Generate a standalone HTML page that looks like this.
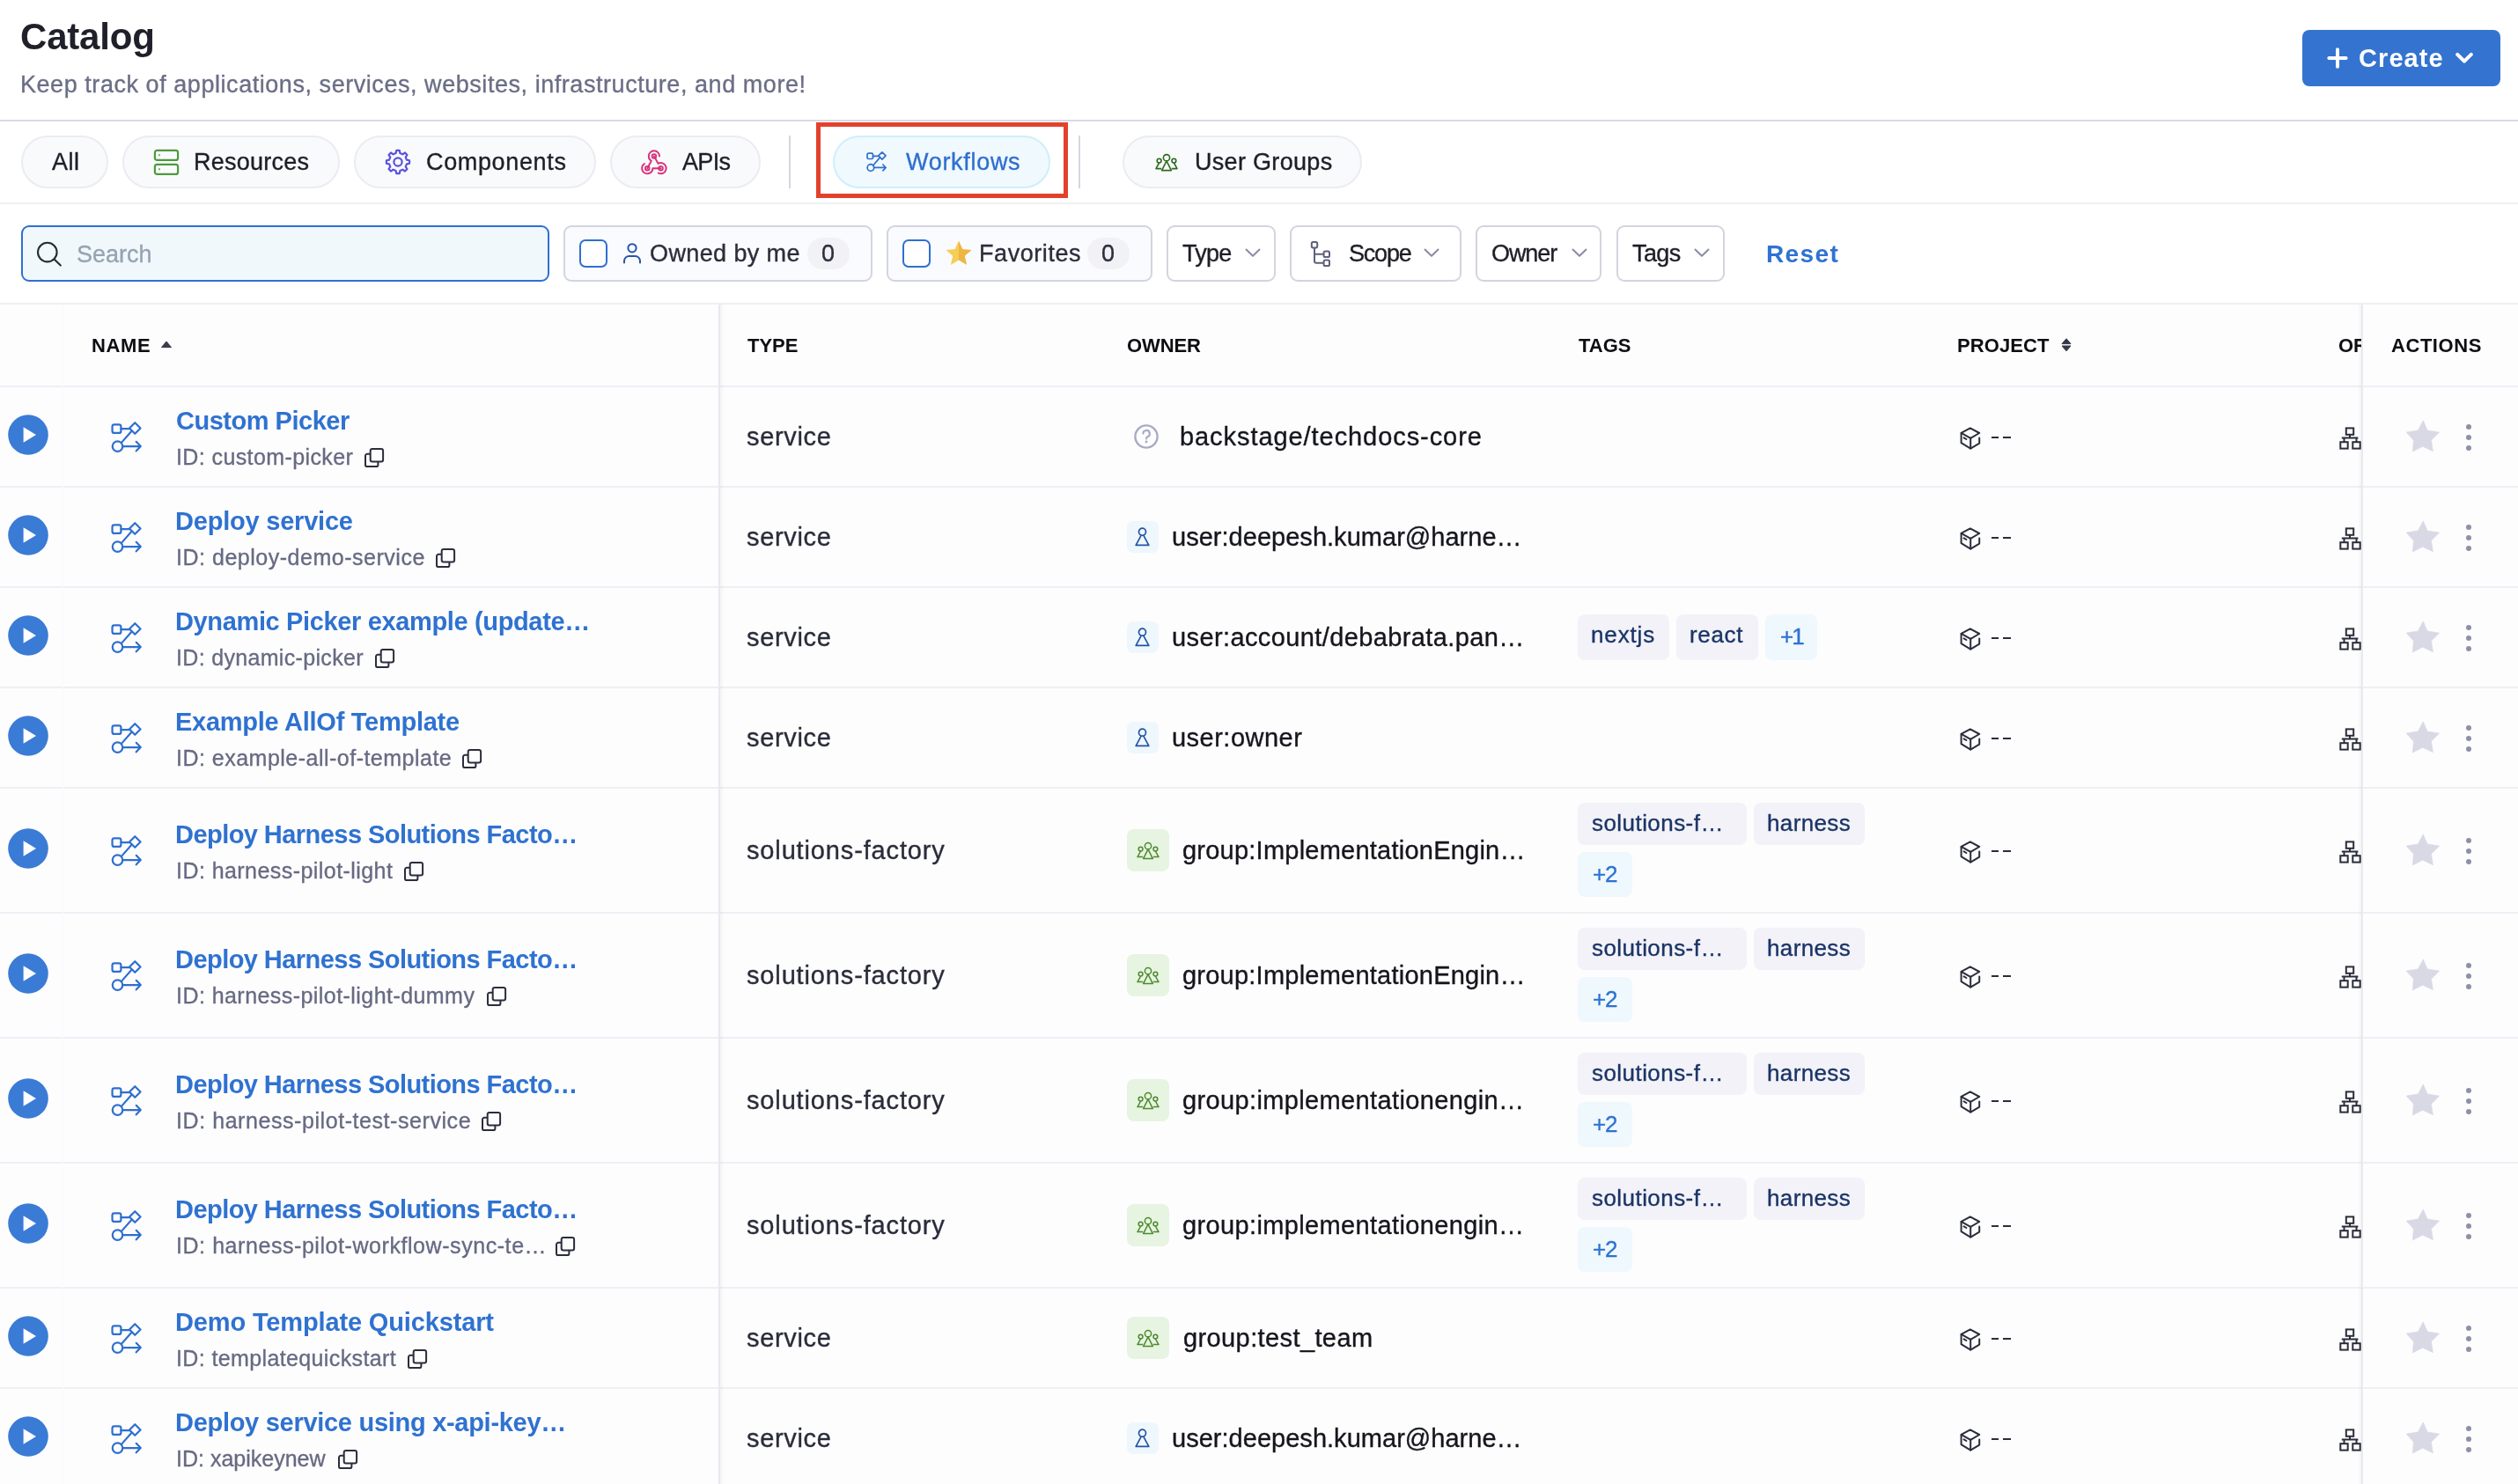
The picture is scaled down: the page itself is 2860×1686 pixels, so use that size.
<!DOCTYPE html>
<html><head><meta charset="utf-8"><title>Catalog</title>
<style>
html,body{margin:0;padding:0}
body{width:2860px;height:1686px;overflow:hidden;position:relative;background:#ffffff;font-family:'Liberation Sans', sans-serif}
.t{position:absolute;white-space:pre;line-height:1;-webkit-font-smoothing:antialiased;will-change:transform}
svg{overflow:visible}
</style></head><body>
<div style="position:absolute;left:0px;top:346px;width:2860px;height:1340px;background:#fdfdfe"></div>
<div style="position:absolute;left:2615px;top:34px;width:225px;height:64px;background:#3474d0;border-radius:8px"></div>
<svg style="position:absolute;left:2641px;top:52px;" width="28" height="28" viewBox="0 0 28 28"><path d="M14 4.35v19.3M4.35 14h19.3" stroke="#fff" stroke-width="4" stroke-linecap="round"/></svg>
<svg style="position:absolute;left:2787px;top:57px;" width="26" height="18" viewBox="0 0 26 18"><path d="M4.2 4.9L12 12.7L19.8 4.9" stroke="#fff" stroke-width="4" fill="none" stroke-linecap="round" stroke-linejoin="round"/></svg>
<div style="position:absolute;left:0px;top:136px;width:2860px;height:2px;background:#d9dae5"></div>
<div style="position:absolute;left:24px;top:154px;width:99px;height:60px;box-sizing:border-box;border:2px solid #ecebf3;background:#f9fafc;border-radius:30px"></div>
<div style="position:absolute;left:139px;top:154px;width:247px;height:60px;box-sizing:border-box;border:2px solid #ecebf3;background:#f9fafc;border-radius:30px"></div>
<svg style="position:absolute;left:172px;top:167px;" width="34" height="34" viewBox="0 0 34 34"><rect x="3.9" y="3.9" width="26.2" height="11" rx="2.5" stroke="#4e9a3c" stroke-width="2.2" fill="none"/><rect x="3.9" y="19.9" width="26.2" height="11" rx="2.5" stroke="#4e9a3c" stroke-width="2.2" fill="none"/><rect x="8" y="8.2" width="2" height="2" fill="#7ab56a"/><rect x="8" y="24.2" width="2" height="2" fill="#7ab56a"/></svg>
<div style="position:absolute;left:402px;top:154px;width:275px;height:60px;box-sizing:border-box;border:2px solid #ecebf3;background:#f9fafc;border-radius:30px"></div>
<svg style="position:absolute;left:434px;top:166px;" width="36" height="36" viewBox="0 0 36 36"><path d="M15.62 8.08 L16.24 4.92 L19.76 4.92 L20.38 8.08 L23.33 9.30 L26.01 7.51 L28.49 9.99 L26.70 12.67 L27.92 15.62 L31.08 16.24 L31.08 19.76 L27.92 20.38 L26.70 23.33 L28.49 26.01 L26.01 28.49 L23.33 26.70 L20.38 27.92 L19.76 31.08 L16.24 31.08 L15.62 27.92 L12.67 26.70 L9.99 28.49 L7.51 26.01 L9.30 23.33 L8.08 20.38 L4.92 19.76 L4.92 16.24 L8.08 15.62 L9.30 12.67 L7.51 9.99 L9.99 7.51 L12.67 9.30Z" stroke="#5a52e0" stroke-width="2.2" fill="none" stroke-linejoin="round"/><circle cx="18" cy="18" r="4.6" stroke="#5a52e0" stroke-width="2.2" fill="none"/></svg>
<div style="position:absolute;left:693px;top:154px;width:171px;height:60px;box-sizing:border-box;border:2px solid #ecebf3;background:#f9fafc;border-radius:30px"></div>
<svg style="position:absolute;left:720px;top:162px;" width="44" height="44" viewBox="0 0 44 44"><g transform="translate(4.54 3.16) scale(1.53)" stroke="#d8317a" stroke-width="1.25" fill="none" stroke-linecap="round" stroke-linejoin="round">
<path d="M4.876 13.61a4 4 0 1 0 6.124 3.39h6"/>
<path d="M15.066 20.502a4 4 0 1 0 1.934 -7.502c-.706 0 -1.424 .179 -2 .5l-3 -5.5"/>
<path d="M16 8a4 4 0 1 0 -8 0c0 1.506 .77 2.818 2 3.5l-3 5.5"/>
<circle cx="12" cy="8" r="1.5"/><circle cx="7" cy="17" r="1.5"/><circle cx="17" cy="17" r="1.5"/>
</g></svg>
<div style="position:absolute;left:896px;top:154px;width:2px;height:60px;background:#d5d6e1"></div>
<div style="position:absolute;left:1225px;top:154px;width:2px;height:60px;background:#d5d6e1"></div>
<div style="position:absolute;left:927px;top:139px;width:286px;height:86px;box-sizing:border-box;border:5px solid #e2412b"></div>
<div style="position:absolute;left:946px;top:154px;width:247px;height:60px;box-sizing:border-box;border:2px solid #cfeefb;background:#f0f9fd;border-radius:30px"></div>
<svg style="position:absolute;left:984px;top:172px;" width="23" height="23" viewBox="0 0 23 23"><g transform="scale(0.6764705882352942)" stroke="#2e6fcf" stroke-width="2.51" fill="none" stroke-linecap="round" stroke-linejoin="round">
<rect x="1.5" y="3.2" width="9.6" height="9.4" rx="2.2"/>
<path d="M11.1 7.9 H20.3"/>
<path d="M26.5 1.2 L32.6 7.3 L26.5 13.4 L20.4 7.3 Z"/>
<path d="M22.6 10.6 L11.6 23.2"/>
<circle cx="7.3" cy="27.3" r="5.6"/>
<path d="M12.9 27.3 H32.6 M27.9 22.2 L32.8 27.3 L27.9 32.4"/>
</g></svg>
<div style="position:absolute;left:1275px;top:154px;width:272px;height:60px;box-sizing:border-box;border:2px solid #ecebf3;background:#f9fafc;border-radius:30px"></div>
<svg style="position:absolute;left:1312px;top:174px;" width="26" height="21" viewBox="0 0 26 21"><g stroke="#2d6a1f" stroke-width="1.6" fill="none" stroke-linejoin="round">
<circle cx="13" cy="5.2" r="3.6"/><path d="M13 8.8 L7.6 19.6 H18.4 Z"/>
<circle cx="4.6" cy="8.6" r="2.4"/><path d="M4.6 11 L1 17.6 H7.2"/>
<circle cx="21.4" cy="8.6" r="2.4"/><path d="M21.4 11 L25 17.6 H18.8"/>
</g></svg>
<div style="position:absolute;left:0px;top:230px;width:2860px;height:2px;background:#efeff5"></div>
<div style="position:absolute;left:24px;top:256px;width:600px;height:64px;box-sizing:border-box;border:2.5px solid #2f6fd0;background:#f0f8fc;border-radius:9px"></div>
<svg style="position:absolute;left:40px;top:273px;" width="32" height="32" viewBox="0 0 32 32"><circle cx="13.8" cy="13.6" r="10.8" stroke="#2b2b36" stroke-width="2.1" fill="none"/><path d="M21.6 21.4 L28.8 28.6" stroke="#2b2b36" stroke-width="2.1" stroke-linecap="round"/></svg>
<div style="position:absolute;left:640px;top:256px;width:351px;height:64px;box-sizing:border-box;border:2px solid #d3d4df;background:#fafbfe;border-radius:9px"></div>
<div style="position:absolute;left:658px;top:272px;width:32px;height:32px;box-sizing:border-box;border:2.5px solid #2f6fd0;background:#fff;border-radius:7px"></div>
<svg style="position:absolute;left:706px;top:275px;" width="24" height="26" viewBox="0 0 24 26"><circle cx="12" cy="6.8" r="4.6" stroke="#2553a8" stroke-width="2" fill="none"/><path d="M3 23.5 V21.5 A5.5 5.5 0 0 1 8.5 16 H15.5 A5.5 5.5 0 0 1 21 21.5 V23.5" stroke="#2553a8" stroke-width="2" fill="none" stroke-linecap="round"/></svg>
<div style="position:absolute;left:917px;top:270px;width:48px;height:36px;background:#f2f1f6;border-radius:18px"></div>
<div style="position:absolute;left:1007px;top:256px;width:302px;height:64px;box-sizing:border-box;border:2px solid #d3d4df;background:#fafbfe;border-radius:9px"></div>
<div style="position:absolute;left:1025px;top:272px;width:32px;height:32px;box-sizing:border-box;border:2.5px solid #2f6fd0;background:#fff;border-radius:7px"></div>
<svg style="position:absolute;left:1072px;top:272px;" width="34" height="32" viewBox="0 0 34 32"><path d="M17 1.5 L21.3 11 L31.6 11.9 L23.8 18.8 L26.2 29 L17 23.6 Z" fill="#efb642"/><path d="M17 1.5 L12.7 11 L2.4 11.9 L10.2 18.8 L7.8 29 L17 23.6 Z" fill="#f5cd57"/></svg>
<div style="position:absolute;left:1235px;top:270px;width:48px;height:36px;background:#f2f1f6;border-radius:18px"></div>
<div style="position:absolute;left:1325px;top:256px;width:124px;height:64px;box-sizing:border-box;border:2px solid #d3d4df;background:#ffffff;border-radius:9px"></div>
<svg style="position:absolute;left:1413px;top:281px;" width="20" height="13" viewBox="0 0 20 13"><path d="M2.5 2.5 L10 9.8 L17.5 2.5" stroke="#8a8ca4" stroke-width="2" fill="none" stroke-linecap="round" stroke-linejoin="round"/></svg>
<div style="position:absolute;left:1465px;top:256px;width:195px;height:64px;box-sizing:border-box;border:2px solid #d3d4df;background:#ffffff;border-radius:9px"></div>
<svg style="position:absolute;left:1486px;top:271px;" width="28" height="34" viewBox="0 0 28 34"><g stroke="#5d607b" stroke-width="2" fill="none"><rect x="3.8" y="4" width="6.4" height="6.4" rx="1.6"/><rect x="17.6" y="14.6" width="6.4" height="6.4" rx="1.6"/><rect x="17.6" y="24.6" width="6.4" height="6.4" rx="1.6"/><path d="M7 10.4 V25.6 A2.2 2.2 0 0 0 9.2 27.8 H17.6 M7 17.8 H17.6"/></g></svg>
<svg style="position:absolute;left:1616px;top:281px;" width="20" height="13" viewBox="0 0 20 13"><path d="M2.5 2.5 L10 9.8 L17.5 2.5" stroke="#8a8ca4" stroke-width="2" fill="none" stroke-linecap="round" stroke-linejoin="round"/></svg>
<div style="position:absolute;left:1676px;top:256px;width:143px;height:64px;box-sizing:border-box;border:2px solid #d3d4df;background:#ffffff;border-radius:9px"></div>
<svg style="position:absolute;left:1784px;top:281px;" width="20" height="13" viewBox="0 0 20 13"><path d="M2.5 2.5 L10 9.8 L17.5 2.5" stroke="#8a8ca4" stroke-width="2" fill="none" stroke-linecap="round" stroke-linejoin="round"/></svg>
<div style="position:absolute;left:1836px;top:256px;width:123px;height:64px;box-sizing:border-box;border:2px solid #d3d4df;background:#ffffff;border-radius:9px"></div>
<svg style="position:absolute;left:1923px;top:281px;" width="20" height="13" viewBox="0 0 20 13"><path d="M2.5 2.5 L10 9.8 L17.5 2.5" stroke="#8a8ca4" stroke-width="2" fill="none" stroke-linecap="round" stroke-linejoin="round"/></svg>
<div style="position:absolute;left:0px;top:344px;width:2860px;height:2px;background:#efeff5"></div>
<svg style="position:absolute;left:182px;top:386px;" width="14" height="10" viewBox="0 0 14 10"><path d="M1.5 8.6 L7 2 L12.5 8.6 Z" fill="#3a3b4a" stroke="#3a3b4a" stroke-width="1" stroke-linejoin="round"/></svg>
<svg style="position:absolute;left:2340px;top:383px;" width="14" height="18" viewBox="0 0 14 18"><path d="M2 7.6 L7 1.8 L12 7.6 Z M2 10 L7 15.8 L12 10 Z" fill="#363746" stroke="#363746" stroke-width="1" stroke-linejoin="round"/></svg>
<div style="position:absolute;left:0px;top:438px;width:2860px;height:2px;background:#efeff5"></div>
<div style="position:absolute;left:0px;top:552px;width:2860px;height:2px;background:#efeff5"></div>
<svg style="position:absolute;left:9px;top:471px;" width="46" height="46" viewBox="0 0 46 46"><circle cx="23" cy="23" r="22.8" fill="#3a7bd5"/><path d="M17.6 14.2 L32 23 L17.6 31.8 Z" fill="#fff"/></svg>
<svg style="position:absolute;left:126px;top:479px;" width="35" height="35" viewBox="0 0 35 35"><g transform="scale(1.0294117647058822)" stroke="#2e6fcf" stroke-width="2.14" fill="none" stroke-linecap="round" stroke-linejoin="round">
<rect x="1.5" y="3.2" width="9.6" height="9.4" rx="2.2"/>
<path d="M11.1 7.9 H20.3"/>
<path d="M26.5 1.2 L32.6 7.3 L26.5 13.4 L20.4 7.3 Z"/>
<path d="M22.6 10.6 L11.6 23.2"/>
<circle cx="7.3" cy="27.3" r="5.6"/>
<path d="M12.9 27.3 H32.6 M27.9 22.2 L32.8 27.3 L27.9 32.4"/>
</g></svg>
<svg style="position:absolute;left:414px;top:509px;" width="24" height="24" viewBox="0 0 24 24"><g stroke="#2b2d3b" stroke-width="2" fill="none" stroke-linejoin="round"><rect x="6.7" y="1" width="14.4" height="14.4" rx="2.2"/><path d="M6.7 6.7 H3.2 A2.2 2.2 0 0 0 1 8.9 V18.9 A2.2 2.2 0 0 0 3.2 21.1 H13.2 A2.2 2.2 0 0 0 15.4 18.9 V15.4"/></g></svg>
<svg style="position:absolute;left:1287px;top:481px;" width="30" height="30" viewBox="0 0 30 30"><circle cx="15" cy="15" r="12.6" stroke="#a9abc4" stroke-width="2.4" fill="none"/><path d="M11.4 11.6 A3.7 3.7 0 1 1 16.2 15.2 C15.2 15.7 15 16.3 15 17.4" stroke="#a9abc4" stroke-width="2.2" fill="none" stroke-linecap="round"/><circle cx="15" cy="21" r="1.4" fill="#a9abc4"/></svg>
<svg style="position:absolute;left:2225px;top:485px;" width="26" height="26" viewBox="0 0 26 26"><g stroke="#2b2d3b" stroke-width="2" fill="none" stroke-linejoin="round" stroke-linecap="round"><path d="M2.6 6.9 L12.8 1.4 L23.2 7 L13.2 12.8 Z"/><path d="M2.6 6.9 V18.2 L13.2 24.6 L23.2 18.6 V12.4"/><path d="M13.2 12.8 V24.6"/><path d="M5.6 12.4 L8.4 14"/></g></svg>
<div style="position:absolute;left:2262px;top:496px;width:8px;height:2px;background:#2b2d3b"></div>
<div style="position:absolute;left:2275px;top:496px;width:9px;height:2px;background:#2b2d3b"></div>
<svg style="position:absolute;left:2656px;top:485px;" width="26" height="26" viewBox="0 0 26 26"><g stroke="#2b2d3b" stroke-width="2" fill="none"><rect x="8.8" y="1.4" width="8.4" height="7.4"/><rect x="2.3" y="17.2" width="8.4" height="7.4"/><rect x="16.3" y="17.2" width="8.4" height="7.4"/><path d="M13 8.8 V12.4 M3.8 12.4 H22.4 M6.5 12.4 V17.2 M20.5 12.4 V17.2"/></g></svg>
<svg style="position:absolute;left:2730px;top:475px;" width="44" height="42" viewBox="0 0 44 42"><path d="M22.3 2.8 L27.1 13.9 L40.6 16.1 L31.5 25.2 L33.4 37.7 L21.7 32.2 L10.3 38.1 L11.4 25.2 L3.1 16.1 L16.4 13.9 Z" fill="#d9d9e6" stroke="#d9d9e6" stroke-width="0.6" stroke-linejoin="round"/></svg>
<div style="position:absolute;left:2801px;top:482px;width:6px;height:6px;background:#8e90a6;border-radius:3px"></div>
<div style="position:absolute;left:2801px;top:494px;width:6px;height:6px;background:#8e90a6;border-radius:3px"></div>
<div style="position:absolute;left:2801px;top:506px;width:6px;height:6px;background:#8e90a6;border-radius:3px"></div>
<div style="position:absolute;left:0px;top:666px;width:2860px;height:2px;background:#efeff5"></div>
<svg style="position:absolute;left:9px;top:585px;" width="46" height="46" viewBox="0 0 46 46"><circle cx="23" cy="23" r="22.8" fill="#3a7bd5"/><path d="M17.6 14.2 L32 23 L17.6 31.8 Z" fill="#fff"/></svg>
<svg style="position:absolute;left:126px;top:593px;" width="35" height="35" viewBox="0 0 35 35"><g transform="scale(1.0294117647058822)" stroke="#2e6fcf" stroke-width="2.14" fill="none" stroke-linecap="round" stroke-linejoin="round">
<rect x="1.5" y="3.2" width="9.6" height="9.4" rx="2.2"/>
<path d="M11.1 7.9 H20.3"/>
<path d="M26.5 1.2 L32.6 7.3 L26.5 13.4 L20.4 7.3 Z"/>
<path d="M22.6 10.6 L11.6 23.2"/>
<circle cx="7.3" cy="27.3" r="5.6"/>
<path d="M12.9 27.3 H32.6 M27.9 22.2 L32.8 27.3 L27.9 32.4"/>
</g></svg>
<svg style="position:absolute;left:495px;top:623px;" width="24" height="24" viewBox="0 0 24 24"><g stroke="#2b2d3b" stroke-width="2" fill="none" stroke-linejoin="round"><rect x="6.7" y="1" width="14.4" height="14.4" rx="2.2"/><path d="M6.7 6.7 H3.2 A2.2 2.2 0 0 0 1 8.9 V18.9 A2.2 2.2 0 0 0 3.2 21.1 H13.2 A2.2 2.2 0 0 0 15.4 18.9 V15.4"/></g></svg>
<div style="position:absolute;left:1280px;top:592px;width:36px;height:36px;background:#eef7fc;border-radius:7px"></div>
<svg style="position:absolute;left:1289px;top:599px;" width="18" height="22" viewBox="0 0 18 22"><circle cx="8.5" cy="5.2" r="4" stroke="#2553a8" stroke-width="1.7" fill="none"/><path d="M7.2 9.2 L1.2 20.4 H15.8 L9.8 9.2" stroke="#2553a8" stroke-width="1.7" fill="none" stroke-linejoin="round"/></svg>
<svg style="position:absolute;left:2225px;top:599px;" width="26" height="26" viewBox="0 0 26 26"><g stroke="#2b2d3b" stroke-width="2" fill="none" stroke-linejoin="round" stroke-linecap="round"><path d="M2.6 6.9 L12.8 1.4 L23.2 7 L13.2 12.8 Z"/><path d="M2.6 6.9 V18.2 L13.2 24.6 L23.2 18.6 V12.4"/><path d="M13.2 12.8 V24.6"/><path d="M5.6 12.4 L8.4 14"/></g></svg>
<div style="position:absolute;left:2262px;top:610px;width:8px;height:2px;background:#2b2d3b"></div>
<div style="position:absolute;left:2275px;top:610px;width:9px;height:2px;background:#2b2d3b"></div>
<svg style="position:absolute;left:2656px;top:599px;" width="26" height="26" viewBox="0 0 26 26"><g stroke="#2b2d3b" stroke-width="2" fill="none"><rect x="8.8" y="1.4" width="8.4" height="7.4"/><rect x="2.3" y="17.2" width="8.4" height="7.4"/><rect x="16.3" y="17.2" width="8.4" height="7.4"/><path d="M13 8.8 V12.4 M3.8 12.4 H22.4 M6.5 12.4 V17.2 M20.5 12.4 V17.2"/></g></svg>
<svg style="position:absolute;left:2730px;top:589px;" width="44" height="42" viewBox="0 0 44 42"><path d="M22.3 2.8 L27.1 13.9 L40.6 16.1 L31.5 25.2 L33.4 37.7 L21.7 32.2 L10.3 38.1 L11.4 25.2 L3.1 16.1 L16.4 13.9 Z" fill="#d9d9e6" stroke="#d9d9e6" stroke-width="0.6" stroke-linejoin="round"/></svg>
<div style="position:absolute;left:2801px;top:596px;width:6px;height:6px;background:#8e90a6;border-radius:3px"></div>
<div style="position:absolute;left:2801px;top:608px;width:6px;height:6px;background:#8e90a6;border-radius:3px"></div>
<div style="position:absolute;left:2801px;top:620px;width:6px;height:6px;background:#8e90a6;border-radius:3px"></div>
<div style="position:absolute;left:0px;top:780px;width:2860px;height:2px;background:#efeff5"></div>
<svg style="position:absolute;left:9px;top:699px;" width="46" height="46" viewBox="0 0 46 46"><circle cx="23" cy="23" r="22.8" fill="#3a7bd5"/><path d="M17.6 14.2 L32 23 L17.6 31.8 Z" fill="#fff"/></svg>
<svg style="position:absolute;left:126px;top:707px;" width="35" height="35" viewBox="0 0 35 35"><g transform="scale(1.0294117647058822)" stroke="#2e6fcf" stroke-width="2.14" fill="none" stroke-linecap="round" stroke-linejoin="round">
<rect x="1.5" y="3.2" width="9.6" height="9.4" rx="2.2"/>
<path d="M11.1 7.9 H20.3"/>
<path d="M26.5 1.2 L32.6 7.3 L26.5 13.4 L20.4 7.3 Z"/>
<path d="M22.6 10.6 L11.6 23.2"/>
<circle cx="7.3" cy="27.3" r="5.6"/>
<path d="M12.9 27.3 H32.6 M27.9 22.2 L32.8 27.3 L27.9 32.4"/>
</g></svg>
<svg style="position:absolute;left:426px;top:737px;" width="24" height="24" viewBox="0 0 24 24"><g stroke="#2b2d3b" stroke-width="2" fill="none" stroke-linejoin="round"><rect x="6.7" y="1" width="14.4" height="14.4" rx="2.2"/><path d="M6.7 6.7 H3.2 A2.2 2.2 0 0 0 1 8.9 V18.9 A2.2 2.2 0 0 0 3.2 21.1 H13.2 A2.2 2.2 0 0 0 15.4 18.9 V15.4"/></g></svg>
<div style="position:absolute;left:1280px;top:706px;width:36px;height:36px;background:#eef7fc;border-radius:7px"></div>
<svg style="position:absolute;left:1289px;top:713px;" width="18" height="22" viewBox="0 0 18 22"><circle cx="8.5" cy="5.2" r="4" stroke="#2553a8" stroke-width="1.7" fill="none"/><path d="M7.2 9.2 L1.2 20.4 H15.8 L9.8 9.2" stroke="#2553a8" stroke-width="1.7" fill="none" stroke-linejoin="round"/></svg>
<div style="position:absolute;left:1792px;top:698px;width:104px;height:52px;background:#f2f2f8;border-radius:8px"></div>
<div style="position:absolute;left:1904px;top:698px;width:93px;height:52px;background:#f2f2f8;border-radius:8px"></div>
<div style="position:absolute;left:2005px;top:698px;width:59px;height:52px;background:#eff8fd;border-radius:8px"></div>
<svg style="position:absolute;left:2225px;top:713px;" width="26" height="26" viewBox="0 0 26 26"><g stroke="#2b2d3b" stroke-width="2" fill="none" stroke-linejoin="round" stroke-linecap="round"><path d="M2.6 6.9 L12.8 1.4 L23.2 7 L13.2 12.8 Z"/><path d="M2.6 6.9 V18.2 L13.2 24.6 L23.2 18.6 V12.4"/><path d="M13.2 12.8 V24.6"/><path d="M5.6 12.4 L8.4 14"/></g></svg>
<div style="position:absolute;left:2262px;top:724px;width:8px;height:2px;background:#2b2d3b"></div>
<div style="position:absolute;left:2275px;top:724px;width:9px;height:2px;background:#2b2d3b"></div>
<svg style="position:absolute;left:2656px;top:713px;" width="26" height="26" viewBox="0 0 26 26"><g stroke="#2b2d3b" stroke-width="2" fill="none"><rect x="8.8" y="1.4" width="8.4" height="7.4"/><rect x="2.3" y="17.2" width="8.4" height="7.4"/><rect x="16.3" y="17.2" width="8.4" height="7.4"/><path d="M13 8.8 V12.4 M3.8 12.4 H22.4 M6.5 12.4 V17.2 M20.5 12.4 V17.2"/></g></svg>
<svg style="position:absolute;left:2730px;top:703px;" width="44" height="42" viewBox="0 0 44 42"><path d="M22.3 2.8 L27.1 13.9 L40.6 16.1 L31.5 25.2 L33.4 37.7 L21.7 32.2 L10.3 38.1 L11.4 25.2 L3.1 16.1 L16.4 13.9 Z" fill="#d9d9e6" stroke="#d9d9e6" stroke-width="0.6" stroke-linejoin="round"/></svg>
<div style="position:absolute;left:2801px;top:710px;width:6px;height:6px;background:#8e90a6;border-radius:3px"></div>
<div style="position:absolute;left:2801px;top:722px;width:6px;height:6px;background:#8e90a6;border-radius:3px"></div>
<div style="position:absolute;left:2801px;top:734px;width:6px;height:6px;background:#8e90a6;border-radius:3px"></div>
<div style="position:absolute;left:0px;top:894px;width:2860px;height:2px;background:#efeff5"></div>
<svg style="position:absolute;left:9px;top:813px;" width="46" height="46" viewBox="0 0 46 46"><circle cx="23" cy="23" r="22.8" fill="#3a7bd5"/><path d="M17.6 14.2 L32 23 L17.6 31.8 Z" fill="#fff"/></svg>
<svg style="position:absolute;left:126px;top:821px;" width="35" height="35" viewBox="0 0 35 35"><g transform="scale(1.0294117647058822)" stroke="#2e6fcf" stroke-width="2.14" fill="none" stroke-linecap="round" stroke-linejoin="round">
<rect x="1.5" y="3.2" width="9.6" height="9.4" rx="2.2"/>
<path d="M11.1 7.9 H20.3"/>
<path d="M26.5 1.2 L32.6 7.3 L26.5 13.4 L20.4 7.3 Z"/>
<path d="M22.6 10.6 L11.6 23.2"/>
<circle cx="7.3" cy="27.3" r="5.6"/>
<path d="M12.9 27.3 H32.6 M27.9 22.2 L32.8 27.3 L27.9 32.4"/>
</g></svg>
<svg style="position:absolute;left:525px;top:851px;" width="24" height="24" viewBox="0 0 24 24"><g stroke="#2b2d3b" stroke-width="2" fill="none" stroke-linejoin="round"><rect x="6.7" y="1" width="14.4" height="14.4" rx="2.2"/><path d="M6.7 6.7 H3.2 A2.2 2.2 0 0 0 1 8.9 V18.9 A2.2 2.2 0 0 0 3.2 21.1 H13.2 A2.2 2.2 0 0 0 15.4 18.9 V15.4"/></g></svg>
<div style="position:absolute;left:1280px;top:820px;width:36px;height:36px;background:#eef7fc;border-radius:7px"></div>
<svg style="position:absolute;left:1289px;top:827px;" width="18" height="22" viewBox="0 0 18 22"><circle cx="8.5" cy="5.2" r="4" stroke="#2553a8" stroke-width="1.7" fill="none"/><path d="M7.2 9.2 L1.2 20.4 H15.8 L9.8 9.2" stroke="#2553a8" stroke-width="1.7" fill="none" stroke-linejoin="round"/></svg>
<svg style="position:absolute;left:2225px;top:827px;" width="26" height="26" viewBox="0 0 26 26"><g stroke="#2b2d3b" stroke-width="2" fill="none" stroke-linejoin="round" stroke-linecap="round"><path d="M2.6 6.9 L12.8 1.4 L23.2 7 L13.2 12.8 Z"/><path d="M2.6 6.9 V18.2 L13.2 24.6 L23.2 18.6 V12.4"/><path d="M13.2 12.8 V24.6"/><path d="M5.6 12.4 L8.4 14"/></g></svg>
<div style="position:absolute;left:2262px;top:838px;width:8px;height:2px;background:#2b2d3b"></div>
<div style="position:absolute;left:2275px;top:838px;width:9px;height:2px;background:#2b2d3b"></div>
<svg style="position:absolute;left:2656px;top:827px;" width="26" height="26" viewBox="0 0 26 26"><g stroke="#2b2d3b" stroke-width="2" fill="none"><rect x="8.8" y="1.4" width="8.4" height="7.4"/><rect x="2.3" y="17.2" width="8.4" height="7.4"/><rect x="16.3" y="17.2" width="8.4" height="7.4"/><path d="M13 8.8 V12.4 M3.8 12.4 H22.4 M6.5 12.4 V17.2 M20.5 12.4 V17.2"/></g></svg>
<svg style="position:absolute;left:2730px;top:817px;" width="44" height="42" viewBox="0 0 44 42"><path d="M22.3 2.8 L27.1 13.9 L40.6 16.1 L31.5 25.2 L33.4 37.7 L21.7 32.2 L10.3 38.1 L11.4 25.2 L3.1 16.1 L16.4 13.9 Z" fill="#d9d9e6" stroke="#d9d9e6" stroke-width="0.6" stroke-linejoin="round"/></svg>
<div style="position:absolute;left:2801px;top:824px;width:6px;height:6px;background:#8e90a6;border-radius:3px"></div>
<div style="position:absolute;left:2801px;top:836px;width:6px;height:6px;background:#8e90a6;border-radius:3px"></div>
<div style="position:absolute;left:2801px;top:848px;width:6px;height:6px;background:#8e90a6;border-radius:3px"></div>
<div style="position:absolute;left:0px;top:1036px;width:2860px;height:2px;background:#efeff5"></div>
<svg style="position:absolute;left:9px;top:941px;" width="46" height="46" viewBox="0 0 46 46"><circle cx="23" cy="23" r="22.8" fill="#3a7bd5"/><path d="M17.6 14.2 L32 23 L17.6 31.8 Z" fill="#fff"/></svg>
<svg style="position:absolute;left:126px;top:949px;" width="35" height="35" viewBox="0 0 35 35"><g transform="scale(1.0294117647058822)" stroke="#2e6fcf" stroke-width="2.14" fill="none" stroke-linecap="round" stroke-linejoin="round">
<rect x="1.5" y="3.2" width="9.6" height="9.4" rx="2.2"/>
<path d="M11.1 7.9 H20.3"/>
<path d="M26.5 1.2 L32.6 7.3 L26.5 13.4 L20.4 7.3 Z"/>
<path d="M22.6 10.6 L11.6 23.2"/>
<circle cx="7.3" cy="27.3" r="5.6"/>
<path d="M12.9 27.3 H32.6 M27.9 22.2 L32.8 27.3 L27.9 32.4"/>
</g></svg>
<svg style="position:absolute;left:459px;top:979px;" width="24" height="24" viewBox="0 0 24 24"><g stroke="#2b2d3b" stroke-width="2" fill="none" stroke-linejoin="round"><rect x="6.7" y="1" width="14.4" height="14.4" rx="2.2"/><path d="M6.7 6.7 H3.2 A2.2 2.2 0 0 0 1 8.9 V18.9 A2.2 2.2 0 0 0 3.2 21.1 H13.2 A2.2 2.2 0 0 0 15.4 18.9 V15.4"/></g></svg>
<div style="position:absolute;left:1280px;top:942px;width:48px;height:48px;background:#e6f4e1;border-radius:8px"></div>
<svg style="position:absolute;left:1291px;top:956px;" width="26" height="21" viewBox="0 0 26 21"><g stroke="#4f8a2e" stroke-width="1.5" fill="none" stroke-linejoin="round">
<circle cx="13" cy="5.2" r="3.6"/><path d="M13 8.8 L7.6 19.6 H18.4 Z"/>
<circle cx="4.6" cy="8.6" r="2.4"/><path d="M4.6 11 L1 17.6 H7.2"/>
<circle cx="21.4" cy="8.6" r="2.4"/><path d="M21.4 11 L25 17.6 H18.8"/>
</g></svg>
<div style="position:absolute;left:1792px;top:912px;width:192px;height:48px;background:#f2f2f8;border-radius:8px"></div>
<div style="position:absolute;left:1992px;top:912px;width:126px;height:48px;background:#f2f2f8;border-radius:8px"></div>
<div style="position:absolute;left:1792px;top:968px;width:62px;height:51px;background:#eff8fd;border-radius:8px"></div>
<svg style="position:absolute;left:2225px;top:955px;" width="26" height="26" viewBox="0 0 26 26"><g stroke="#2b2d3b" stroke-width="2" fill="none" stroke-linejoin="round" stroke-linecap="round"><path d="M2.6 6.9 L12.8 1.4 L23.2 7 L13.2 12.8 Z"/><path d="M2.6 6.9 V18.2 L13.2 24.6 L23.2 18.6 V12.4"/><path d="M13.2 12.8 V24.6"/><path d="M5.6 12.4 L8.4 14"/></g></svg>
<div style="position:absolute;left:2262px;top:966px;width:8px;height:2px;background:#2b2d3b"></div>
<div style="position:absolute;left:2275px;top:966px;width:9px;height:2px;background:#2b2d3b"></div>
<svg style="position:absolute;left:2656px;top:955px;" width="26" height="26" viewBox="0 0 26 26"><g stroke="#2b2d3b" stroke-width="2" fill="none"><rect x="8.8" y="1.4" width="8.4" height="7.4"/><rect x="2.3" y="17.2" width="8.4" height="7.4"/><rect x="16.3" y="17.2" width="8.4" height="7.4"/><path d="M13 8.8 V12.4 M3.8 12.4 H22.4 M6.5 12.4 V17.2 M20.5 12.4 V17.2"/></g></svg>
<svg style="position:absolute;left:2730px;top:945px;" width="44" height="42" viewBox="0 0 44 42"><path d="M22.3 2.8 L27.1 13.9 L40.6 16.1 L31.5 25.2 L33.4 37.7 L21.7 32.2 L10.3 38.1 L11.4 25.2 L3.1 16.1 L16.4 13.9 Z" fill="#d9d9e6" stroke="#d9d9e6" stroke-width="0.6" stroke-linejoin="round"/></svg>
<div style="position:absolute;left:2801px;top:952px;width:6px;height:6px;background:#8e90a6;border-radius:3px"></div>
<div style="position:absolute;left:2801px;top:964px;width:6px;height:6px;background:#8e90a6;border-radius:3px"></div>
<div style="position:absolute;left:2801px;top:976px;width:6px;height:6px;background:#8e90a6;border-radius:3px"></div>
<div style="position:absolute;left:0px;top:1178px;width:2860px;height:2px;background:#efeff5"></div>
<svg style="position:absolute;left:9px;top:1083px;" width="46" height="46" viewBox="0 0 46 46"><circle cx="23" cy="23" r="22.8" fill="#3a7bd5"/><path d="M17.6 14.2 L32 23 L17.6 31.8 Z" fill="#fff"/></svg>
<svg style="position:absolute;left:126px;top:1091px;" width="35" height="35" viewBox="0 0 35 35"><g transform="scale(1.0294117647058822)" stroke="#2e6fcf" stroke-width="2.14" fill="none" stroke-linecap="round" stroke-linejoin="round">
<rect x="1.5" y="3.2" width="9.6" height="9.4" rx="2.2"/>
<path d="M11.1 7.9 H20.3"/>
<path d="M26.5 1.2 L32.6 7.3 L26.5 13.4 L20.4 7.3 Z"/>
<path d="M22.6 10.6 L11.6 23.2"/>
<circle cx="7.3" cy="27.3" r="5.6"/>
<path d="M12.9 27.3 H32.6 M27.9 22.2 L32.8 27.3 L27.9 32.4"/>
</g></svg>
<svg style="position:absolute;left:553px;top:1121px;" width="24" height="24" viewBox="0 0 24 24"><g stroke="#2b2d3b" stroke-width="2" fill="none" stroke-linejoin="round"><rect x="6.7" y="1" width="14.4" height="14.4" rx="2.2"/><path d="M6.7 6.7 H3.2 A2.2 2.2 0 0 0 1 8.9 V18.9 A2.2 2.2 0 0 0 3.2 21.1 H13.2 A2.2 2.2 0 0 0 15.4 18.9 V15.4"/></g></svg>
<div style="position:absolute;left:1280px;top:1084px;width:48px;height:48px;background:#e6f4e1;border-radius:8px"></div>
<svg style="position:absolute;left:1291px;top:1098px;" width="26" height="21" viewBox="0 0 26 21"><g stroke="#4f8a2e" stroke-width="1.5" fill="none" stroke-linejoin="round">
<circle cx="13" cy="5.2" r="3.6"/><path d="M13 8.8 L7.6 19.6 H18.4 Z"/>
<circle cx="4.6" cy="8.6" r="2.4"/><path d="M4.6 11 L1 17.6 H7.2"/>
<circle cx="21.4" cy="8.6" r="2.4"/><path d="M21.4 11 L25 17.6 H18.8"/>
</g></svg>
<div style="position:absolute;left:1792px;top:1054px;width:192px;height:48px;background:#f2f2f8;border-radius:8px"></div>
<div style="position:absolute;left:1992px;top:1054px;width:126px;height:48px;background:#f2f2f8;border-radius:8px"></div>
<div style="position:absolute;left:1792px;top:1110px;width:62px;height:51px;background:#eff8fd;border-radius:8px"></div>
<svg style="position:absolute;left:2225px;top:1097px;" width="26" height="26" viewBox="0 0 26 26"><g stroke="#2b2d3b" stroke-width="2" fill="none" stroke-linejoin="round" stroke-linecap="round"><path d="M2.6 6.9 L12.8 1.4 L23.2 7 L13.2 12.8 Z"/><path d="M2.6 6.9 V18.2 L13.2 24.6 L23.2 18.6 V12.4"/><path d="M13.2 12.8 V24.6"/><path d="M5.6 12.4 L8.4 14"/></g></svg>
<div style="position:absolute;left:2262px;top:1108px;width:8px;height:2px;background:#2b2d3b"></div>
<div style="position:absolute;left:2275px;top:1108px;width:9px;height:2px;background:#2b2d3b"></div>
<svg style="position:absolute;left:2656px;top:1097px;" width="26" height="26" viewBox="0 0 26 26"><g stroke="#2b2d3b" stroke-width="2" fill="none"><rect x="8.8" y="1.4" width="8.4" height="7.4"/><rect x="2.3" y="17.2" width="8.4" height="7.4"/><rect x="16.3" y="17.2" width="8.4" height="7.4"/><path d="M13 8.8 V12.4 M3.8 12.4 H22.4 M6.5 12.4 V17.2 M20.5 12.4 V17.2"/></g></svg>
<svg style="position:absolute;left:2730px;top:1087px;" width="44" height="42" viewBox="0 0 44 42"><path d="M22.3 2.8 L27.1 13.9 L40.6 16.1 L31.5 25.2 L33.4 37.7 L21.7 32.2 L10.3 38.1 L11.4 25.2 L3.1 16.1 L16.4 13.9 Z" fill="#d9d9e6" stroke="#d9d9e6" stroke-width="0.6" stroke-linejoin="round"/></svg>
<div style="position:absolute;left:2801px;top:1094px;width:6px;height:6px;background:#8e90a6;border-radius:3px"></div>
<div style="position:absolute;left:2801px;top:1106px;width:6px;height:6px;background:#8e90a6;border-radius:3px"></div>
<div style="position:absolute;left:2801px;top:1118px;width:6px;height:6px;background:#8e90a6;border-radius:3px"></div>
<div style="position:absolute;left:0px;top:1320px;width:2860px;height:2px;background:#efeff5"></div>
<svg style="position:absolute;left:9px;top:1225px;" width="46" height="46" viewBox="0 0 46 46"><circle cx="23" cy="23" r="22.8" fill="#3a7bd5"/><path d="M17.6 14.2 L32 23 L17.6 31.8 Z" fill="#fff"/></svg>
<svg style="position:absolute;left:126px;top:1233px;" width="35" height="35" viewBox="0 0 35 35"><g transform="scale(1.0294117647058822)" stroke="#2e6fcf" stroke-width="2.14" fill="none" stroke-linecap="round" stroke-linejoin="round">
<rect x="1.5" y="3.2" width="9.6" height="9.4" rx="2.2"/>
<path d="M11.1 7.9 H20.3"/>
<path d="M26.5 1.2 L32.6 7.3 L26.5 13.4 L20.4 7.3 Z"/>
<path d="M22.6 10.6 L11.6 23.2"/>
<circle cx="7.3" cy="27.3" r="5.6"/>
<path d="M12.9 27.3 H32.6 M27.9 22.2 L32.8 27.3 L27.9 32.4"/>
</g></svg>
<svg style="position:absolute;left:547px;top:1263px;" width="24" height="24" viewBox="0 0 24 24"><g stroke="#2b2d3b" stroke-width="2" fill="none" stroke-linejoin="round"><rect x="6.7" y="1" width="14.4" height="14.4" rx="2.2"/><path d="M6.7 6.7 H3.2 A2.2 2.2 0 0 0 1 8.9 V18.9 A2.2 2.2 0 0 0 3.2 21.1 H13.2 A2.2 2.2 0 0 0 15.4 18.9 V15.4"/></g></svg>
<div style="position:absolute;left:1280px;top:1226px;width:48px;height:48px;background:#e6f4e1;border-radius:8px"></div>
<svg style="position:absolute;left:1291px;top:1240px;" width="26" height="21" viewBox="0 0 26 21"><g stroke="#4f8a2e" stroke-width="1.5" fill="none" stroke-linejoin="round">
<circle cx="13" cy="5.2" r="3.6"/><path d="M13 8.8 L7.6 19.6 H18.4 Z"/>
<circle cx="4.6" cy="8.6" r="2.4"/><path d="M4.6 11 L1 17.6 H7.2"/>
<circle cx="21.4" cy="8.6" r="2.4"/><path d="M21.4 11 L25 17.6 H18.8"/>
</g></svg>
<div style="position:absolute;left:1792px;top:1196px;width:192px;height:48px;background:#f2f2f8;border-radius:8px"></div>
<div style="position:absolute;left:1992px;top:1196px;width:126px;height:48px;background:#f2f2f8;border-radius:8px"></div>
<div style="position:absolute;left:1792px;top:1252px;width:62px;height:51px;background:#eff8fd;border-radius:8px"></div>
<svg style="position:absolute;left:2225px;top:1239px;" width="26" height="26" viewBox="0 0 26 26"><g stroke="#2b2d3b" stroke-width="2" fill="none" stroke-linejoin="round" stroke-linecap="round"><path d="M2.6 6.9 L12.8 1.4 L23.2 7 L13.2 12.8 Z"/><path d="M2.6 6.9 V18.2 L13.2 24.6 L23.2 18.6 V12.4"/><path d="M13.2 12.8 V24.6"/><path d="M5.6 12.4 L8.4 14"/></g></svg>
<div style="position:absolute;left:2262px;top:1250px;width:8px;height:2px;background:#2b2d3b"></div>
<div style="position:absolute;left:2275px;top:1250px;width:9px;height:2px;background:#2b2d3b"></div>
<svg style="position:absolute;left:2656px;top:1239px;" width="26" height="26" viewBox="0 0 26 26"><g stroke="#2b2d3b" stroke-width="2" fill="none"><rect x="8.8" y="1.4" width="8.4" height="7.4"/><rect x="2.3" y="17.2" width="8.4" height="7.4"/><rect x="16.3" y="17.2" width="8.4" height="7.4"/><path d="M13 8.8 V12.4 M3.8 12.4 H22.4 M6.5 12.4 V17.2 M20.5 12.4 V17.2"/></g></svg>
<svg style="position:absolute;left:2730px;top:1229px;" width="44" height="42" viewBox="0 0 44 42"><path d="M22.3 2.8 L27.1 13.9 L40.6 16.1 L31.5 25.2 L33.4 37.7 L21.7 32.2 L10.3 38.1 L11.4 25.2 L3.1 16.1 L16.4 13.9 Z" fill="#d9d9e6" stroke="#d9d9e6" stroke-width="0.6" stroke-linejoin="round"/></svg>
<div style="position:absolute;left:2801px;top:1236px;width:6px;height:6px;background:#8e90a6;border-radius:3px"></div>
<div style="position:absolute;left:2801px;top:1248px;width:6px;height:6px;background:#8e90a6;border-radius:3px"></div>
<div style="position:absolute;left:2801px;top:1260px;width:6px;height:6px;background:#8e90a6;border-radius:3px"></div>
<div style="position:absolute;left:0px;top:1462px;width:2860px;height:2px;background:#efeff5"></div>
<svg style="position:absolute;left:9px;top:1367px;" width="46" height="46" viewBox="0 0 46 46"><circle cx="23" cy="23" r="22.8" fill="#3a7bd5"/><path d="M17.6 14.2 L32 23 L17.6 31.8 Z" fill="#fff"/></svg>
<svg style="position:absolute;left:126px;top:1375px;" width="35" height="35" viewBox="0 0 35 35"><g transform="scale(1.0294117647058822)" stroke="#2e6fcf" stroke-width="2.14" fill="none" stroke-linecap="round" stroke-linejoin="round">
<rect x="1.5" y="3.2" width="9.6" height="9.4" rx="2.2"/>
<path d="M11.1 7.9 H20.3"/>
<path d="M26.5 1.2 L32.6 7.3 L26.5 13.4 L20.4 7.3 Z"/>
<path d="M22.6 10.6 L11.6 23.2"/>
<circle cx="7.3" cy="27.3" r="5.6"/>
<path d="M12.9 27.3 H32.6 M27.9 22.2 L32.8 27.3 L27.9 32.4"/>
</g></svg>
<svg style="position:absolute;left:631px;top:1405px;" width="24" height="24" viewBox="0 0 24 24"><g stroke="#2b2d3b" stroke-width="2" fill="none" stroke-linejoin="round"><rect x="6.7" y="1" width="14.4" height="14.4" rx="2.2"/><path d="M6.7 6.7 H3.2 A2.2 2.2 0 0 0 1 8.9 V18.9 A2.2 2.2 0 0 0 3.2 21.1 H13.2 A2.2 2.2 0 0 0 15.4 18.9 V15.4"/></g></svg>
<div style="position:absolute;left:1280px;top:1368px;width:48px;height:48px;background:#e6f4e1;border-radius:8px"></div>
<svg style="position:absolute;left:1291px;top:1382px;" width="26" height="21" viewBox="0 0 26 21"><g stroke="#4f8a2e" stroke-width="1.5" fill="none" stroke-linejoin="round">
<circle cx="13" cy="5.2" r="3.6"/><path d="M13 8.8 L7.6 19.6 H18.4 Z"/>
<circle cx="4.6" cy="8.6" r="2.4"/><path d="M4.6 11 L1 17.6 H7.2"/>
<circle cx="21.4" cy="8.6" r="2.4"/><path d="M21.4 11 L25 17.6 H18.8"/>
</g></svg>
<div style="position:absolute;left:1792px;top:1338px;width:192px;height:48px;background:#f2f2f8;border-radius:8px"></div>
<div style="position:absolute;left:1992px;top:1338px;width:126px;height:48px;background:#f2f2f8;border-radius:8px"></div>
<div style="position:absolute;left:1792px;top:1394px;width:62px;height:51px;background:#eff8fd;border-radius:8px"></div>
<svg style="position:absolute;left:2225px;top:1381px;" width="26" height="26" viewBox="0 0 26 26"><g stroke="#2b2d3b" stroke-width="2" fill="none" stroke-linejoin="round" stroke-linecap="round"><path d="M2.6 6.9 L12.8 1.4 L23.2 7 L13.2 12.8 Z"/><path d="M2.6 6.9 V18.2 L13.2 24.6 L23.2 18.6 V12.4"/><path d="M13.2 12.8 V24.6"/><path d="M5.6 12.4 L8.4 14"/></g></svg>
<div style="position:absolute;left:2262px;top:1392px;width:8px;height:2px;background:#2b2d3b"></div>
<div style="position:absolute;left:2275px;top:1392px;width:9px;height:2px;background:#2b2d3b"></div>
<svg style="position:absolute;left:2656px;top:1381px;" width="26" height="26" viewBox="0 0 26 26"><g stroke="#2b2d3b" stroke-width="2" fill="none"><rect x="8.8" y="1.4" width="8.4" height="7.4"/><rect x="2.3" y="17.2" width="8.4" height="7.4"/><rect x="16.3" y="17.2" width="8.4" height="7.4"/><path d="M13 8.8 V12.4 M3.8 12.4 H22.4 M6.5 12.4 V17.2 M20.5 12.4 V17.2"/></g></svg>
<svg style="position:absolute;left:2730px;top:1371px;" width="44" height="42" viewBox="0 0 44 42"><path d="M22.3 2.8 L27.1 13.9 L40.6 16.1 L31.5 25.2 L33.4 37.7 L21.7 32.2 L10.3 38.1 L11.4 25.2 L3.1 16.1 L16.4 13.9 Z" fill="#d9d9e6" stroke="#d9d9e6" stroke-width="0.6" stroke-linejoin="round"/></svg>
<div style="position:absolute;left:2801px;top:1378px;width:6px;height:6px;background:#8e90a6;border-radius:3px"></div>
<div style="position:absolute;left:2801px;top:1390px;width:6px;height:6px;background:#8e90a6;border-radius:3px"></div>
<div style="position:absolute;left:2801px;top:1402px;width:6px;height:6px;background:#8e90a6;border-radius:3px"></div>
<div style="position:absolute;left:0px;top:1576px;width:2860px;height:2px;background:#efeff5"></div>
<svg style="position:absolute;left:9px;top:1495px;" width="46" height="46" viewBox="0 0 46 46"><circle cx="23" cy="23" r="22.8" fill="#3a7bd5"/><path d="M17.6 14.2 L32 23 L17.6 31.8 Z" fill="#fff"/></svg>
<svg style="position:absolute;left:126px;top:1503px;" width="35" height="35" viewBox="0 0 35 35"><g transform="scale(1.0294117647058822)" stroke="#2e6fcf" stroke-width="2.14" fill="none" stroke-linecap="round" stroke-linejoin="round">
<rect x="1.5" y="3.2" width="9.6" height="9.4" rx="2.2"/>
<path d="M11.1 7.9 H20.3"/>
<path d="M26.5 1.2 L32.6 7.3 L26.5 13.4 L20.4 7.3 Z"/>
<path d="M22.6 10.6 L11.6 23.2"/>
<circle cx="7.3" cy="27.3" r="5.6"/>
<path d="M12.9 27.3 H32.6 M27.9 22.2 L32.8 27.3 L27.9 32.4"/>
</g></svg>
<svg style="position:absolute;left:463px;top:1533px;" width="24" height="24" viewBox="0 0 24 24"><g stroke="#2b2d3b" stroke-width="2" fill="none" stroke-linejoin="round"><rect x="6.7" y="1" width="14.4" height="14.4" rx="2.2"/><path d="M6.7 6.7 H3.2 A2.2 2.2 0 0 0 1 8.9 V18.9 A2.2 2.2 0 0 0 3.2 21.1 H13.2 A2.2 2.2 0 0 0 15.4 18.9 V15.4"/></g></svg>
<div style="position:absolute;left:1280px;top:1496px;width:48px;height:48px;background:#e6f4e1;border-radius:8px"></div>
<svg style="position:absolute;left:1291px;top:1510px;" width="26" height="21" viewBox="0 0 26 21"><g stroke="#4f8a2e" stroke-width="1.5" fill="none" stroke-linejoin="round">
<circle cx="13" cy="5.2" r="3.6"/><path d="M13 8.8 L7.6 19.6 H18.4 Z"/>
<circle cx="4.6" cy="8.6" r="2.4"/><path d="M4.6 11 L1 17.6 H7.2"/>
<circle cx="21.4" cy="8.6" r="2.4"/><path d="M21.4 11 L25 17.6 H18.8"/>
</g></svg>
<svg style="position:absolute;left:2225px;top:1509px;" width="26" height="26" viewBox="0 0 26 26"><g stroke="#2b2d3b" stroke-width="2" fill="none" stroke-linejoin="round" stroke-linecap="round"><path d="M2.6 6.9 L12.8 1.4 L23.2 7 L13.2 12.8 Z"/><path d="M2.6 6.9 V18.2 L13.2 24.6 L23.2 18.6 V12.4"/><path d="M13.2 12.8 V24.6"/><path d="M5.6 12.4 L8.4 14"/></g></svg>
<div style="position:absolute;left:2262px;top:1520px;width:8px;height:2px;background:#2b2d3b"></div>
<div style="position:absolute;left:2275px;top:1520px;width:9px;height:2px;background:#2b2d3b"></div>
<svg style="position:absolute;left:2656px;top:1509px;" width="26" height="26" viewBox="0 0 26 26"><g stroke="#2b2d3b" stroke-width="2" fill="none"><rect x="8.8" y="1.4" width="8.4" height="7.4"/><rect x="2.3" y="17.2" width="8.4" height="7.4"/><rect x="16.3" y="17.2" width="8.4" height="7.4"/><path d="M13 8.8 V12.4 M3.8 12.4 H22.4 M6.5 12.4 V17.2 M20.5 12.4 V17.2"/></g></svg>
<svg style="position:absolute;left:2730px;top:1499px;" width="44" height="42" viewBox="0 0 44 42"><path d="M22.3 2.8 L27.1 13.9 L40.6 16.1 L31.5 25.2 L33.4 37.7 L21.7 32.2 L10.3 38.1 L11.4 25.2 L3.1 16.1 L16.4 13.9 Z" fill="#d9d9e6" stroke="#d9d9e6" stroke-width="0.6" stroke-linejoin="round"/></svg>
<div style="position:absolute;left:2801px;top:1506px;width:6px;height:6px;background:#8e90a6;border-radius:3px"></div>
<div style="position:absolute;left:2801px;top:1518px;width:6px;height:6px;background:#8e90a6;border-radius:3px"></div>
<div style="position:absolute;left:2801px;top:1530px;width:6px;height:6px;background:#8e90a6;border-radius:3px"></div>
<div style="position:absolute;left:0px;top:1690px;width:2860px;height:2px;background:#efeff5"></div>
<svg style="position:absolute;left:9px;top:1609px;" width="46" height="46" viewBox="0 0 46 46"><circle cx="23" cy="23" r="22.8" fill="#3a7bd5"/><path d="M17.6 14.2 L32 23 L17.6 31.8 Z" fill="#fff"/></svg>
<svg style="position:absolute;left:126px;top:1617px;" width="35" height="35" viewBox="0 0 35 35"><g transform="scale(1.0294117647058822)" stroke="#2e6fcf" stroke-width="2.14" fill="none" stroke-linecap="round" stroke-linejoin="round">
<rect x="1.5" y="3.2" width="9.6" height="9.4" rx="2.2"/>
<path d="M11.1 7.9 H20.3"/>
<path d="M26.5 1.2 L32.6 7.3 L26.5 13.4 L20.4 7.3 Z"/>
<path d="M22.6 10.6 L11.6 23.2"/>
<circle cx="7.3" cy="27.3" r="5.6"/>
<path d="M12.9 27.3 H32.6 M27.9 22.2 L32.8 27.3 L27.9 32.4"/>
</g></svg>
<svg style="position:absolute;left:384px;top:1647px;" width="24" height="24" viewBox="0 0 24 24"><g stroke="#2b2d3b" stroke-width="2" fill="none" stroke-linejoin="round"><rect x="6.7" y="1" width="14.4" height="14.4" rx="2.2"/><path d="M6.7 6.7 H3.2 A2.2 2.2 0 0 0 1 8.9 V18.9 A2.2 2.2 0 0 0 3.2 21.1 H13.2 A2.2 2.2 0 0 0 15.4 18.9 V15.4"/></g></svg>
<div style="position:absolute;left:1280px;top:1616px;width:36px;height:36px;background:#eef7fc;border-radius:7px"></div>
<svg style="position:absolute;left:1289px;top:1623px;" width="18" height="22" viewBox="0 0 18 22"><circle cx="8.5" cy="5.2" r="4" stroke="#2553a8" stroke-width="1.7" fill="none"/><path d="M7.2 9.2 L1.2 20.4 H15.8 L9.8 9.2" stroke="#2553a8" stroke-width="1.7" fill="none" stroke-linejoin="round"/></svg>
<svg style="position:absolute;left:2225px;top:1623px;" width="26" height="26" viewBox="0 0 26 26"><g stroke="#2b2d3b" stroke-width="2" fill="none" stroke-linejoin="round" stroke-linecap="round"><path d="M2.6 6.9 L12.8 1.4 L23.2 7 L13.2 12.8 Z"/><path d="M2.6 6.9 V18.2 L13.2 24.6 L23.2 18.6 V12.4"/><path d="M13.2 12.8 V24.6"/><path d="M5.6 12.4 L8.4 14"/></g></svg>
<div style="position:absolute;left:2262px;top:1634px;width:8px;height:2px;background:#2b2d3b"></div>
<div style="position:absolute;left:2275px;top:1634px;width:9px;height:2px;background:#2b2d3b"></div>
<svg style="position:absolute;left:2656px;top:1623px;" width="26" height="26" viewBox="0 0 26 26"><g stroke="#2b2d3b" stroke-width="2" fill="none"><rect x="8.8" y="1.4" width="8.4" height="7.4"/><rect x="2.3" y="17.2" width="8.4" height="7.4"/><rect x="16.3" y="17.2" width="8.4" height="7.4"/><path d="M13 8.8 V12.4 M3.8 12.4 H22.4 M6.5 12.4 V17.2 M20.5 12.4 V17.2"/></g></svg>
<svg style="position:absolute;left:2730px;top:1613px;" width="44" height="42" viewBox="0 0 44 42"><path d="M22.3 2.8 L27.1 13.9 L40.6 16.1 L31.5 25.2 L33.4 37.7 L21.7 32.2 L10.3 38.1 L11.4 25.2 L3.1 16.1 L16.4 13.9 Z" fill="#d9d9e6" stroke="#d9d9e6" stroke-width="0.6" stroke-linejoin="round"/></svg>
<div style="position:absolute;left:2801px;top:1620px;width:6px;height:6px;background:#8e90a6;border-radius:3px"></div>
<div style="position:absolute;left:2801px;top:1632px;width:6px;height:6px;background:#8e90a6;border-radius:3px"></div>
<div style="position:absolute;left:2801px;top:1644px;width:6px;height:6px;background:#8e90a6;border-radius:3px"></div>
<div style="position:absolute;left:816px;top:346px;width:2px;height:1340px;background:#e9e9ef"></div>
<div style="position:absolute;left:818px;top:346px;width:5px;height:1340px;background:linear-gradient(90deg,rgba(0,0,0,0.035),rgba(0,0,0,0))"></div>
<div style="position:absolute;left:71px;top:346px;width:1px;height:1340px;background:#fafafc"></div>
<div style="position:absolute;left:2684px;top:346px;width:176px;height:1340px;background:transparent"></div>
<div class="t" style="left:23.4px;top:21px;font-size:42px;font-weight:700;color:#1f2029;letter-spacing:-0.200px">Catalog</div>
<div class="t" style="left:23.0px;top:83px;font-size:27px;font-weight:400;color:#6b6e86;letter-spacing:0.550px;-webkit-text-stroke-width:0.35px">Keep track of applications, services, websites, infrastructure, and more!</div>
<div class="t" style="left:2679.0px;top:52px;font-size:29px;font-weight:700;color:#ffffff;letter-spacing:1.080px">Create</div>
<div class="t" style="left:59.0px;top:171px;font-size:27px;font-weight:400;color:#1d1e27;letter-spacing:0.500px;-webkit-text-stroke-width:0.35px">All</div>
<div class="t" style="left:220.4px;top:171px;font-size:27px;font-weight:400;color:#1d1e27;letter-spacing:0.238px;-webkit-text-stroke-width:0.35px">Resources</div>
<div class="t" style="left:484.0px;top:171px;font-size:27px;font-weight:400;color:#1d1e27;letter-spacing:0.644px;-webkit-text-stroke-width:0.35px">Components</div>
<div class="t" style="left:775.0px;top:171px;font-size:27px;font-weight:400;color:#1d1e27;letter-spacing:-0.667px;-webkit-text-stroke-width:0.35px">APIs</div>
<div class="t" style="left:1029.4px;top:171px;font-size:27px;font-weight:400;color:#2f6fd0;letter-spacing:0.700px;-webkit-text-stroke-width:0.35px">Workflows</div>
<div class="t" style="left:1356.7px;top:171px;font-size:27px;font-weight:400;color:#1d1e27;letter-spacing:0.310px;-webkit-text-stroke-width:0.35px">User Groups</div>
<div class="t" style="left:86.5px;top:276px;font-size:27px;font-weight:400;color:#97a3b2;letter-spacing:-0.020px;-webkit-text-stroke-width:0.35px">Search</div>
<div class="t" style="left:738.3px;top:275px;font-size:27px;font-weight:400;color:#2b2d3b;letter-spacing:0.390px;-webkit-text-stroke-width:0.35px">Owned by me</div>
<div class="t" style="left:932.6px;top:275px;font-size:27px;font-weight:400;color:#2b2d3b;letter-spacing:0.000px;-webkit-text-stroke-width:0.35px">0</div>
<div class="t" style="left:1111.7px;top:275px;font-size:27px;font-weight:400;color:#2b2d3b;letter-spacing:0.562px;-webkit-text-stroke-width:0.35px">Favorites</div>
<div class="t" style="left:1251.0px;top:275px;font-size:27px;font-weight:400;color:#2b2d3b;letter-spacing:0.000px;-webkit-text-stroke-width:0.35px">0</div>
<div class="t" style="left:1342.6px;top:275px;font-size:27px;font-weight:400;color:#1d1e27;letter-spacing:-0.733px;-webkit-text-stroke-width:0.35px">Type</div>
<div class="t" style="left:1531.6px;top:275px;font-size:27px;font-weight:400;color:#1d1e27;letter-spacing:-1.200px;-webkit-text-stroke-width:0.35px">Scope</div>
<div class="t" style="left:1694.0px;top:275px;font-size:27px;font-weight:400;color:#1d1e27;letter-spacing:-1.075px;-webkit-text-stroke-width:0.35px">Owner</div>
<div class="t" style="left:1853.8px;top:275px;font-size:27px;font-weight:400;color:#1d1e27;letter-spacing:-0.600px;-webkit-text-stroke-width:0.35px">Tags</div>
<div class="t" style="left:2005.7px;top:275px;font-size:28px;font-weight:700;color:#2f72d2;letter-spacing:1.375px">Reset</div>
<div class="t" style="left:103.8px;top:382px;font-size:22px;font-weight:700;color:#0d0d12;letter-spacing:0.667px">NAME</div>
<div class="t" style="left:849.0px;top:382px;font-size:22px;font-weight:700;color:#0d0d12;letter-spacing:0.000px">TYPE</div>
<div class="t" style="left:1280.0px;top:382px;font-size:22px;font-weight:700;color:#0d0d12;letter-spacing:-0.100px">OWNER</div>
<div class="t" style="left:1792.8px;top:382px;font-size:22px;font-weight:700;color:#0d0d12;letter-spacing:-0.033px">TAGS</div>
<div class="t" style="left:2223.4px;top:382px;font-size:22px;font-weight:700;color:#0d0d12;letter-spacing:0.100px">PROJECT</div>
<div class="t" style="left:2655.5px;top:382px;font-size:22px;font-weight:700;color:#0d0d12;letter-spacing:0.000px;width:26.5px;overflow:hidden">OR</div>
<div class="t" style="left:2715.7px;top:382px;font-size:22px;font-weight:700;color:#0d0d12;letter-spacing:0.550px">ACTIONS</div>
<div class="t" style="left:199.9px;top:464px;font-size:29px;font-weight:700;color:#2f72d0;letter-spacing:-0.483px">Custom Picker</div>
<div class="t" style="left:199.5px;top:507px;font-size:25px;font-weight:400;color:#676a82;letter-spacing:0.400px;-webkit-text-stroke-width:0.35px">ID: custom-picker</div>
<div class="t" style="left:848.3px;top:482px;font-size:29px;font-weight:400;color:#2a2c3a;letter-spacing:0.650px;-webkit-text-stroke-width:0.35px">service</div>
<div class="t" style="left:1339.5px;top:482px;font-size:29px;font-weight:400;color:#15161d;letter-spacing:0.932px;-webkit-text-stroke-width:0.35px">backstage/techdocs-core</div>
<div class="t" style="left:198.9px;top:578px;font-size:29px;font-weight:700;color:#2f72d0;letter-spacing:-0.215px">Deploy service</div>
<div class="t" style="left:199.5px;top:621px;font-size:25px;font-weight:400;color:#676a82;letter-spacing:0.518px;-webkit-text-stroke-width:0.35px">ID: deploy-demo-service</div>
<div class="t" style="left:848.3px;top:596px;font-size:29px;font-weight:400;color:#2a2c3a;letter-spacing:0.650px;-webkit-text-stroke-width:0.35px">service</div>
<div class="t" style="left:1331.1px;top:596px;font-size:29px;font-weight:400;color:#15161d;letter-spacing:0.025px;-webkit-text-stroke-width:0.35px">user:deepesh.kumar@harne…</div>
<div class="t" style="left:198.9px;top:692px;font-size:29px;font-weight:700;color:#2f72d0;letter-spacing:-0.357px">Dynamic Picker example (update…</div>
<div class="t" style="left:199.5px;top:735px;font-size:25px;font-weight:400;color:#676a82;letter-spacing:0.324px;-webkit-text-stroke-width:0.35px">ID: dynamic-picker</div>
<div class="t" style="left:848.3px;top:710px;font-size:29px;font-weight:400;color:#2a2c3a;letter-spacing:0.650px;-webkit-text-stroke-width:0.35px">service</div>
<div class="t" style="left:1331.1px;top:710px;font-size:29px;font-weight:400;color:#15161d;letter-spacing:0.392px;-webkit-text-stroke-width:0.35px">user:account/debabrata.pan…</div>
<div class="t" style="left:1807.0px;top:708px;font-size:26px;font-weight:400;color:#1b3466;letter-spacing:0.860px;-webkit-text-stroke-width:0.35px">nextjs</div>
<div class="t" style="left:1918.6px;top:708px;font-size:26px;font-weight:400;color:#1b3466;letter-spacing:0.650px;-webkit-text-stroke-width:0.35px">react</div>
<div class="t" style="left:2021.5px;top:710px;font-size:26px;font-weight:400;color:#2f72d2;letter-spacing:-2.000px;-webkit-text-stroke-width:0.35px">+1</div>
<div class="t" style="left:198.9px;top:806px;font-size:29px;font-weight:700;color:#2f72d0;letter-spacing:-0.271px">Example AllOf Template</div>
<div class="t" style="left:199.5px;top:849px;font-size:25px;font-weight:400;color:#676a82;letter-spacing:0.485px;-webkit-text-stroke-width:0.35px">ID: example-all-of-template</div>
<div class="t" style="left:848.3px;top:824px;font-size:29px;font-weight:400;color:#2a2c3a;letter-spacing:0.650px;-webkit-text-stroke-width:0.35px">service</div>
<div class="t" style="left:1331.1px;top:824px;font-size:29px;font-weight:400;color:#15161d;letter-spacing:0.489px;-webkit-text-stroke-width:0.35px">user:owner</div>
<div class="t" style="left:198.9px;top:934px;font-size:29px;font-weight:700;color:#2f72d0;letter-spacing:-0.553px">Deploy Harness Solutions Facto…</div>
<div class="t" style="left:199.5px;top:977px;font-size:25px;font-weight:400;color:#676a82;letter-spacing:0.441px;-webkit-text-stroke-width:0.35px">ID: harness-pilot-light</div>
<div class="t" style="left:848.3px;top:952px;font-size:29px;font-weight:400;color:#2a2c3a;letter-spacing:0.856px;-webkit-text-stroke-width:0.35px">solutions-factory</div>
<div class="t" style="left:1343.2px;top:952px;font-size:29px;font-weight:400;color:#15161d;letter-spacing:0.232px;-webkit-text-stroke-width:0.35px">group:ImplementationEngin…</div>
<div class="t" style="left:1808.3px;top:922px;font-size:26px;font-weight:400;color:#1b3466;letter-spacing:0.445px;-webkit-text-stroke-width:0.35px">solutions-f…</div>
<div class="t" style="left:2006.8px;top:922px;font-size:26px;font-weight:400;color:#1b3466;letter-spacing:0.367px;-webkit-text-stroke-width:0.35px">harness</div>
<div class="t" style="left:1809.0px;top:980px;font-size:26px;font-weight:400;color:#2f72d2;letter-spacing:-1.100px;-webkit-text-stroke-width:0.35px">+2</div>
<div class="t" style="left:198.9px;top:1076px;font-size:29px;font-weight:700;color:#2f72d0;letter-spacing:-0.553px">Deploy Harness Solutions Facto…</div>
<div class="t" style="left:199.5px;top:1119px;font-size:25px;font-weight:400;color:#676a82;letter-spacing:0.443px;-webkit-text-stroke-width:0.35px">ID: harness-pilot-light-dummy</div>
<div class="t" style="left:848.3px;top:1094px;font-size:29px;font-weight:400;color:#2a2c3a;letter-spacing:0.856px;-webkit-text-stroke-width:0.35px">solutions-factory</div>
<div class="t" style="left:1343.2px;top:1094px;font-size:29px;font-weight:400;color:#15161d;letter-spacing:0.232px;-webkit-text-stroke-width:0.35px">group:ImplementationEngin…</div>
<div class="t" style="left:1808.3px;top:1064px;font-size:26px;font-weight:400;color:#1b3466;letter-spacing:0.445px;-webkit-text-stroke-width:0.35px">solutions-f…</div>
<div class="t" style="left:2006.8px;top:1064px;font-size:26px;font-weight:400;color:#1b3466;letter-spacing:0.367px;-webkit-text-stroke-width:0.35px">harness</div>
<div class="t" style="left:1809.0px;top:1122px;font-size:26px;font-weight:400;color:#2f72d2;letter-spacing:-1.100px;-webkit-text-stroke-width:0.35px">+2</div>
<div class="t" style="left:198.9px;top:1218px;font-size:29px;font-weight:700;color:#2f72d0;letter-spacing:-0.553px">Deploy Harness Solutions Facto…</div>
<div class="t" style="left:199.5px;top:1261px;font-size:25px;font-weight:400;color:#676a82;letter-spacing:0.566px;-webkit-text-stroke-width:0.35px">ID: harness-pilot-test-service</div>
<div class="t" style="left:848.3px;top:1236px;font-size:29px;font-weight:400;color:#2a2c3a;letter-spacing:0.856px;-webkit-text-stroke-width:0.35px">solutions-factory</div>
<div class="t" style="left:1343.2px;top:1236px;font-size:29px;font-weight:400;color:#15161d;letter-spacing:0.368px;-webkit-text-stroke-width:0.35px">group:implementationengin…</div>
<div class="t" style="left:1808.3px;top:1206px;font-size:26px;font-weight:400;color:#1b3466;letter-spacing:0.445px;-webkit-text-stroke-width:0.35px">solutions-f…</div>
<div class="t" style="left:2006.8px;top:1206px;font-size:26px;font-weight:400;color:#1b3466;letter-spacing:0.367px;-webkit-text-stroke-width:0.35px">harness</div>
<div class="t" style="left:1809.0px;top:1264px;font-size:26px;font-weight:400;color:#2f72d2;letter-spacing:-1.100px;-webkit-text-stroke-width:0.35px">+2</div>
<div class="t" style="left:198.9px;top:1360px;font-size:29px;font-weight:700;color:#2f72d0;letter-spacing:-0.553px">Deploy Harness Solutions Facto…</div>
<div class="t" style="left:199.5px;top:1403px;font-size:25px;font-weight:400;color:#676a82;letter-spacing:0.562px;-webkit-text-stroke-width:0.35px">ID: harness-pilot-workflow-sync-te…</div>
<div class="t" style="left:848.3px;top:1378px;font-size:29px;font-weight:400;color:#2a2c3a;letter-spacing:0.856px;-webkit-text-stroke-width:0.35px">solutions-factory</div>
<div class="t" style="left:1343.2px;top:1378px;font-size:29px;font-weight:400;color:#15161d;letter-spacing:0.368px;-webkit-text-stroke-width:0.35px">group:implementationengin…</div>
<div class="t" style="left:1808.3px;top:1348px;font-size:26px;font-weight:400;color:#1b3466;letter-spacing:0.445px;-webkit-text-stroke-width:0.35px">solutions-f…</div>
<div class="t" style="left:2006.8px;top:1348px;font-size:26px;font-weight:400;color:#1b3466;letter-spacing:0.367px;-webkit-text-stroke-width:0.35px">harness</div>
<div class="t" style="left:1809.0px;top:1406px;font-size:26px;font-weight:400;color:#2f72d2;letter-spacing:-1.100px;-webkit-text-stroke-width:0.35px">+2</div>
<div class="t" style="left:198.9px;top:1488px;font-size:29px;font-weight:700;color:#2f72d0;letter-spacing:-0.143px">Demo Template Quickstart</div>
<div class="t" style="left:199.5px;top:1531px;font-size:25px;font-weight:400;color:#676a82;letter-spacing:0.376px;-webkit-text-stroke-width:0.35px">ID: templatequickstart</div>
<div class="t" style="left:848.3px;top:1506px;font-size:29px;font-weight:400;color:#2a2c3a;letter-spacing:0.650px;-webkit-text-stroke-width:0.35px">service</div>
<div class="t" style="left:1344.0px;top:1506px;font-size:29px;font-weight:400;color:#15161d;letter-spacing:0.393px;-webkit-text-stroke-width:0.35px">group:test_team</div>
<div class="t" style="left:198.9px;top:1602px;font-size:29px;font-weight:700;color:#2f72d0;letter-spacing:-0.287px">Deploy service using x-api-key…</div>
<div class="t" style="left:199.5px;top:1645px;font-size:25px;font-weight:400;color:#676a82;letter-spacing:0.000px;-webkit-text-stroke-width:0.35px">ID: xapikeynew</div>
<div class="t" style="left:848.3px;top:1620px;font-size:29px;font-weight:400;color:#2a2c3a;letter-spacing:0.650px;-webkit-text-stroke-width:0.35px">service</div>
<div class="t" style="left:1331.1px;top:1620px;font-size:29px;font-weight:400;color:#15161d;letter-spacing:0.025px;-webkit-text-stroke-width:0.35px">user:deepesh.kumar@harne…</div>
<div style="position:absolute;left:2678px;top:346px;width:4px;height:1340px;background:linear-gradient(90deg,rgba(0,0,0,0),rgba(0,0,0,0.04))"></div>
<div style="position:absolute;left:2682px;top:346px;width:2px;height:1340px;background:#e9e9ef"></div>
</body></html>
